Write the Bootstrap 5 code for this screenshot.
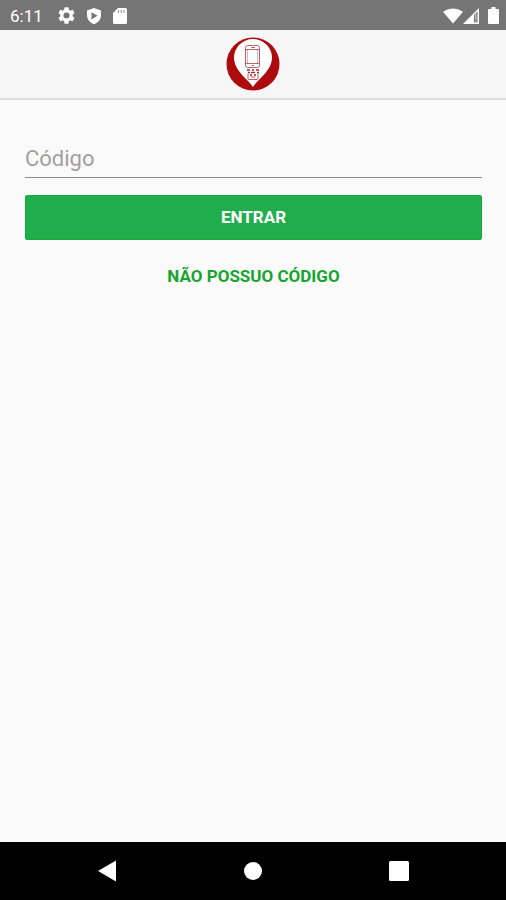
<!DOCTYPE html>
<html lang="pt-BR">
<head>
<meta charset="utf-8">
<meta name="viewport" content="width=device-width, initial-scale=1">
<title>Entrar</title>
<link href="https://cdn.jsdelivr.net/npm/bootstrap@5.3.0/dist/css/bootstrap.min.css" rel="stylesheet">
<style>
body { font-family: Roboto, "Liberation Sans", sans-serif; background: #fafafa; }
.status-bar { height: 30px; background: #757575; color: #fff; font-size: 17px; line-height: 30px; padding: 1px 7px 0 10px; }
.status-bar svg, .app-header svg, .system-nav svg { display: block; }
.status-icons { gap: 11px; margin-left: 15px; }
.app-header { height: 70px; background: #f6f6f6; border-bottom: 2px solid #dedede; }
.login-form { padding: 31px 24px 0 25px; }
.code-input { height: 47px; padding: 8px 0 0; font-size: 22px; line-height: 36px; color: #333; border: 0; border-bottom: 1px solid #8c8c8c; border-radius: 0; background: transparent; }
.code-input:focus { background: transparent; box-shadow: none; border-color: #1fae4b; }
.code-input::placeholder { color: #a0a0a0; opacity: 1; }
.enter-button { height: 45px; margin-top: 17px; padding: 0; background: #1fae4b; border: 1px solid #14ab38; border-radius: 2px; color: #fff; font-size: 17px; font-weight: 700; }
.enter-button:hover { background: #1a9c42; color: #fff; }
.no-code-link { margin-top: 23px; font-size: 17px; line-height: 26px; font-weight: 700; color: #16a52c; }
.system-nav { height: 58px; background: #000; gap: 106px; }
.system-nav button { width: 40px; height: 40px; }
</style>
<script src="https://cdn.jsdelivr.net/npm/bootstrap@5.3.0/dist/js/bootstrap.bundle.min.js" defer></script>
</head>
<body class="d-flex flex-column min-vh-100">
<div class="status-bar d-flex align-items-center">
  <span>6:11</span>
  <div class="status-icons d-flex align-items-center">
    <svg width="17" height="17" viewBox="2 2 20 20" fill="#fff" aria-hidden="true"><path d="M19.140 12.940c.04-.3.06-.61.06-.94s-.02-.64-.07-.94l2.030-1.580a.49.49 0 0 0 .12-.61l-1.920-3.320a.49.49 0 0 0-.59-.22l-2.390.96c-.5-.38-1.030-.7-1.620-.94L14.400 2.810a.48.48 0 0 0-.48-.41h-3.840a.47.47 0 0 0-.47.41L9.250 5.350c-.59.24-1.130.57-1.620.94l-2.390-.96a.48.48 0 0 0-.59.22L2.740 8.870a.47.47 0 0 0 .12.61l2.030 1.580c-.05.3-.09.63-.09.94s.02.64.07.94l-2.030 1.580a.49.49 0 0 0-.12.61l1.920 3.320c.12.22.37.29.59.22l2.390-.96c.5.38 1.030.7 1.620.94l.36 2.540c.05.24.24.41.48.41h3.840c.24 0 .44-.17.47-.41l.36-2.540c.59-.24 1.130-.56 1.620-.94l2.390.96c.22.08.47 0 .59-.22l1.920-3.320a.47.47 0 0 0-.12-.61l-2.010-1.580zM12 15.600a3.600 3.600 0 1 1 0-7.200 3.600 3.600 0 0 1 0 7.200z"/></svg>
    <svg width="16" height="18" viewBox="0 0 16 18" aria-hidden="true"><path d="M8 1 15 3.600V8c0 4.400-2.800 7.800-7 9.200C3.800 15.800 1 12.400 1 8V3.600z" fill="#fff"/><path d="m5.500 5.200 6 3.600-6 3.600z" fill="#757575"/></svg>
    <svg width="14" height="16" viewBox="0 0 14 16" aria-hidden="true"><path d="M5 0h7.500A1.500 1.500 0 0 1 14 1.500v13a1.500 1.500 0 0 1-1.500 1.500h-11A1.500 1.500 0 0 1 0 14.500V5z" fill="#fff"/><path d="M5.500 2v3M8.200 2v3M10.900 2v3" stroke="#a0a0a0" stroke-width="1.200"/></svg>
  </div>
  <div class="d-flex align-items-center ms-auto">
    <svg width="20" height="16" viewBox="0 0 20 16" aria-hidden="true"><path d="M0 3.800Q10-3 20 3.800L10 15.500z" fill="#fff"/></svg>
    <svg width="17" height="16" viewBox="0 0 17 16" aria-hidden="true"><path d="M0 16 16 0v16z" fill="#fff"/><path d="M11 7 14.500 3.500V14.500H11z" fill="#757575"/><path d="M12.800 6v6M12.800 13v1.500" stroke="#ddd"/></svg>
    <svg class="ms-2" width="11" height="17" viewBox="0 0 11 17" aria-hidden="true"><path d="M3.500 0h4v2H10a1 1 0 0 1 1 1v13a1 1 0 0 1-1 1H1a1 1 0 0 1-1-1V3a1 1 0 0 1 1-1h2.500z" fill="#fff"/></svg>
  </div>
</div>
<header class="app-header d-flex align-items-center justify-content-center">
  <svg width="54" height="54" viewBox="0 0 54 54" role="img" aria-label="Logotipo">
    <circle cx="27" cy="27" r="26.500" fill="#ad0b0d"/>
    <path d="M27 50C23 43 8 34 8 20.500a19 18.500 0 0 1 38 0C46 34 31 43 27 50z" fill="#fff"/>
    <g fill="none" stroke="#b96068"><rect x="19.500" y="8.500" width="14" height="22" rx="2"/><path d="M20 12.500h13M20 26.500h13M25 10.500h4M25.500 28.500h2.500"/><path d="M21.500 13v13M31.500 13v13" stroke="#dfb2b5"/><path d="M22 36.500v5q0 1 1 1h8q1 0 1-1v-5M24.500 40h5"/></g>
    <path d="M21 33h3M26 33h2M30 33h3M22 35.500h2M25 35.500h4M31 35.500h2M24 38h2M28 38h2" stroke="#a92832" stroke-width="1.500"/>
  </svg>
</header>
<main class="flex-grow-1">
  <form class="login-form" onsubmit="return false">
    <input class="form-control code-input" id="codigo" type="text" placeholder="Código" aria-label="Código" autocomplete="off">
    <button class="btn enter-button d-block w-100" type="submit">ENTRAR</button>
    <div class="text-center"><a class="no-code-link d-inline-block text-decoration-none" href="#">NÃO POSSUO CÓDIGO</a></div>
  </form>
</main>
<nav class="system-nav d-flex align-items-center justify-content-center" aria-label="Sistema">
  <button class="btn p-0 border-0 d-flex align-items-center justify-content-center" type="button" aria-label="Voltar"><svg width="18" height="22" viewBox="0 0 18 22"><path d="M0 11 18 .5v21z" fill="#fff"/></svg></button>
  <button class="btn p-0 border-0 d-flex align-items-center justify-content-center" type="button" aria-label="Início"><svg width="18" height="18" viewBox="0 0 18 18"><circle cx="9" cy="9" r="9" fill="#fff"/></svg></button>
  <button class="btn p-0 border-0 d-flex align-items-center justify-content-center" type="button" aria-label="Recentes"><svg width="20" height="20" viewBox="0 0 20 20"><rect width="20" height="20" rx="1.500" fill="#fff"/></svg></button>
</nav>
</body>
</html>
